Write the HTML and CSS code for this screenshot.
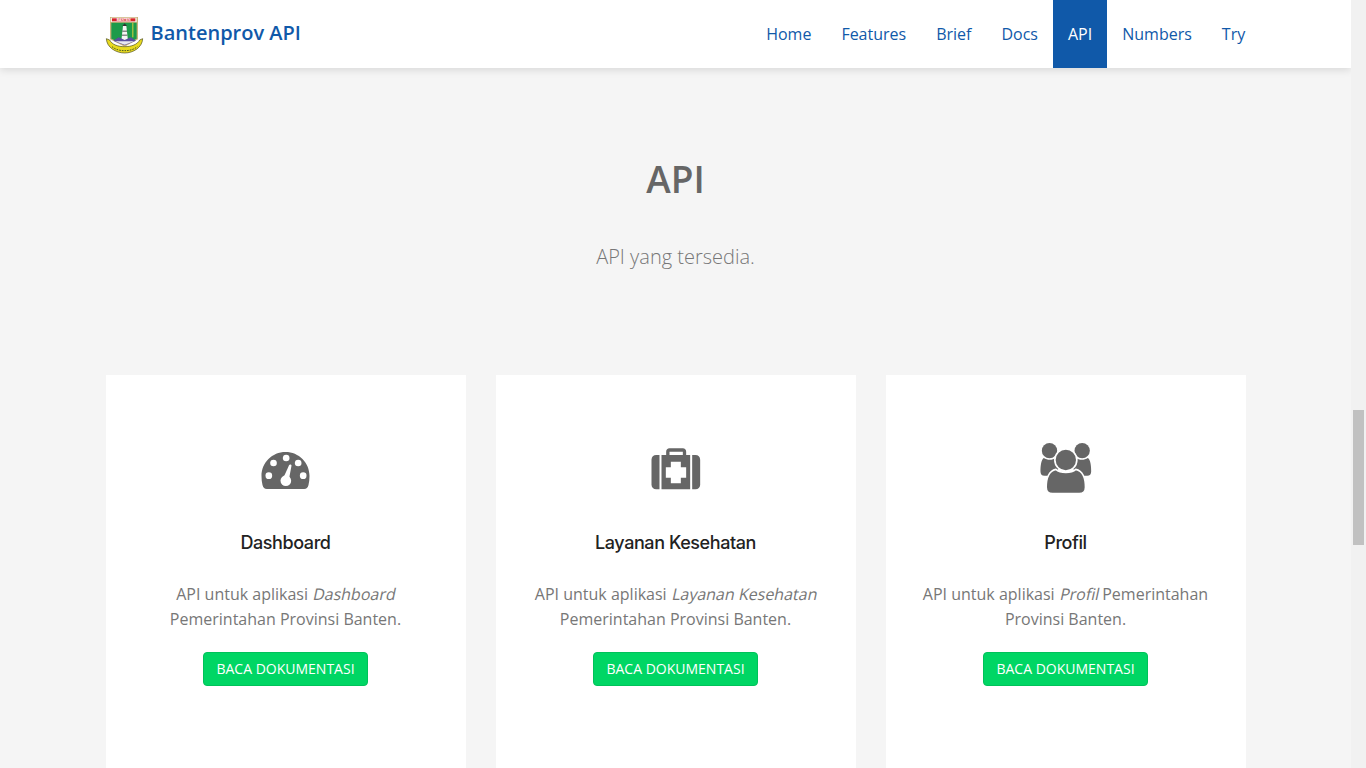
FILE: index.html
```html
<!DOCTYPE html>
<html lang="en">
<head>
  <meta charset="UTF-8">
  <meta name="viewport" content="width=device-width, initial-scale=1.0">
  <title>Bantenprov API</title>
  <link rel="stylesheet" href="styles.css">
</head>
<body>
  <div class="page">
    <div class="content">
      <header class="navbar">
        <div class="container navbar-inner">
          <a class="brand" href="#">
            <svg class="brand-logo" viewBox="45 48 120 120">
              <path d="M60 51H144V118L104 140L60 118Z" fill="#c9b27a"/>
              <rect x="62" y="53" width="78" height="13" fill="#f4f0e6"/>
              <rect x="66" y="55" width="70" height="9" fill="#d8232a"/>
              <text x="101" y="63" class="logo-text">BANTEN</text>
              <path d="M64 68H140V116L104 134L64 116Z" fill="#1c9a4a"/>
              <rect x="127" y="68" width="3" height="44" fill="#d8d040"/>
              <path d="M99 78H109L114 122H94Z" fill="#f5f5f5"/>
              <path d="M97 78L104 70L111 78Z" fill="#333"/>
              <rect x="97" y="92" width="14" height="3" fill="#555"/>
              <rect x="96" y="104" width="16" height="3" fill="#555"/>
              <path d="M70 122L86 112L104 120L122 112L138 122L104 136Z" fill="#5a4f9f"/>
              <path d="M76 124H132L104 134Z" fill="#e8e8f0"/>
              <path d="M49 116L59 120C66 134 84 140 104 140C124 140 142 134 149 120L158 116C157 142 130 159 104 159C78 159 50 142 49 116Z" fill="#e8da20" stroke="#4a4a1a" stroke-width="2"/>
              <path d="M66 140C78 150 92 152 104 152C116 152 130 150 142 140" fill="none" stroke="#4a5a20" stroke-width="3" stroke-dasharray="5 3"/>
            </svg>
            <span class="brand-name">Bantenprov API</span>
          </a>
          <nav class="nav">
            <a href="#">Home</a>
            <a href="#">Features</a>
            <a href="#">Brief</a>
            <a href="#">Docs</a>
            <a class="active" href="#">API</a>
            <a href="#">Numbers</a>
            <a href="#">Try</a>
          </nav>
        </div>
      </header>

      <section class="api">
        <div class="container">
          <h2 class="section-title">API</h2>
          <p class="section-sub">API yang tersedia.</p>
          <div class="cards">
            <div class="card">
              <svg class="card-icon" viewBox="1.5 0 210 210">
                <path d="M49 162C42 162 38 158 36 150C34 142 33 133 33 123C33 83 65 51 105 51C145 51 177 83 177 123C177 133 176 142 174 150C172 158 168 162 161 162Z"/>
                <g class="icon-cut">
                  <circle cx="55" cy="122" r="10"/>
                  <circle cx="69" cy="84" r="10"/>
                  <circle cx="107" cy="69" r="10"/>
                  <circle cx="143" cy="84" r="10"/>
                  <circle cx="158" cy="122" r="10"/>
                  <circle cx="106" cy="137" r="16"/>
                  <path d="M98 130L116 90C118 87 123 88 123 92L115 134Z"/>
                </g>
              </svg>
              <h3>Dashboard</h3>
              <p>API untuk aplikasi <em>Dashboard</em> Pemerintahan Provinsi Banten.</p>
              <a class="btn" href="#">Baca Dokumentasi</a>
            </div>
            <div class="card">
              <svg class="card-icon" viewBox="1.5 0 210 210">
                <path fill-rule="evenodd" d="M77 62V50C77 44 81 40 87 40H127C133 40 137 44 137 50V62H127V50H87V62Z"/>
                <path d="M33 74C33 66 39 60 47 60H57V163H47C39 163 33 157 33 149Z"/>
                <path d="M155 60H165C173 60 179 66 179 74V149C179 157 173 163 165 163H155Z"/>
                <path fill-rule="evenodd" d="M63 60H149V163H63ZM91 80V97H76V128H91V145H121V128H137V97H121V80Z"/>
              </svg>
              <h3>Layanan Kesehatan</h3>
              <p>API untuk aplikasi <em>Layanan Kesehatan</em> Pemerintahan Provinsi Banten.</p>
              <a class="btn" href="#">Baca Dokumentasi</a>
            </div>
            <div class="card">
              <svg class="card-icon" viewBox="1.5 0 210 210">
                <circle cx="57" cy="47" r="23"/>
                <circle cx="155" cy="47" r="23"/>
                <path d="M40 69C50 76 66 76 76 69L90 90L72 122H42C34 122 30 117 30 110C30 92 32 74 40 69Z"/>
                <path d="M172 69C162 76 146 76 136 69L122 90L140 122H170C178 122 182 117 182 110C182 92 180 74 172 69Z"/>
                <g class="icon-outline">
                  <path d="M66 176C55 176 47 169 47 157C47 130 56 107 76 103C90 115 122 115 136 103C156 107 165 130 165 157C165 169 157 176 146 176Z"/>
                  <circle cx="106" cy="75" r="33"/>
                </g>
              </svg>
              <h3>Profil</h3>
              <p>API untuk aplikasi <em>Profil</em> Pemerintahan Provinsi Banten.</p>
              <a class="btn" href="#">Baca Dokumentasi</a>
            </div>
          </div>
        </div>
      </section>
    </div>
    <div class="scrollbar"><div class="scrollbar-thumb"></div></div>
  </div>
</body>
</html>
```

FILE: styles.css
```css
body {
  margin: 0;
  height: 100vh;
  overflow: hidden;
  font-family: "Open Sans", sans-serif;
  font-size: 16px;
  color: #777;
  background-color: #f5f5f5;
}

a {
  text-decoration: none;
}

.page {
  display: flex;
  height: 100vh;
  overflow: hidden;
}

.content {
  flex: 1;
  min-width: 0;
}

.container {
  width: 1140px;
  margin: 0 auto;
}

/* top bar */
.navbar {
  height: 68px;
  background-color: #fff;
  box-shadow: 0 2px 8px rgba(0, 0, 0, 0.12);
}

.navbar-inner {
  display: flex;
  justify-content: space-between;
  height: 100%;
}

.brand {
  display: flex;
  align-items: center;
  gap: 6px;
  color: #1059a9;
  font-size: 20px;
  font-weight: 600;
}

.brand-logo {
  width: 40px;
  height: 40px;
  margin: 4px 0 0 -1px;
}

.brand-name {
  margin-bottom: 3px;
}

.logo-text {
  fill: #fff;
  font-family: "Liberation Sans", sans-serif;
  font-size: 10px;
  font-weight: 700;
  text-anchor: middle;
}

.nav {
  display: flex;
  margin-right: -14.7px;
}

.nav a {
  display: flex;
  align-items: center;
  padding: 0 15px;
  color: #1059a9;
}

.nav a.active {
  background-color: #1059a9;
  color: #fff;
}

/* section */
.api {
  padding-top: 86px;
}

.section-title {
  margin: 0;
  text-align: center;
  color: #666;
  font-size: 37px;
  font-weight: 600;
  line-height: 50px;
}

.section-sub {
  margin: 39px 0 0;
  text-align: center;
  color: #777;
  font-size: 20px;
  font-weight: 300;
  line-height: 28px;
}

.cards {
  display: grid;
  grid-template-columns: repeat(3, 360px);
  gap: 30px;
  margin-top: 104px;
}

.card {
  display: flex;
  flex-direction: column;
  align-items: center;
  height: 500px;
  padding: 60px 30px 0;
  box-sizing: border-box;
  background-color: #fff;
  text-align: center;
}

.card-icon {
  width: 70px;
  height: 70px;
  fill: #666;
}

.icon-cut {
  fill: #fff;
}

.icon-outline {
  stroke: #fff;
  stroke-width: 5;
}

.card h3 {
  margin: 25px 0 0;
  color: #222;
  font-family: Inter, sans-serif;
  font-size: 18px;
  font-weight: 500;
  line-height: 26px;
  letter-spacing: -0.42px;
}

.card p {
  margin: 26px 0 0;
  line-height: 25px;
}

/* the italic in the original is a slanted regular face */
.card em {
  display: inline-block;
  font-style: normal;
  transform: skewX(-12deg);
  transform-origin: 0 75%;
}

.btn {
  display: block;
  margin-top: 20px;
  padding: 0 12.5px;
  border: 1px solid #00c25a;
  border-radius: 4px;
  background-color: #00d664;
  color: #fff;
  font-size: 14px;
  line-height: 32px;
  text-transform: uppercase;
}

/* the scrollbar on the right side of the window */
.scrollbar {
  flex: none;
  display: flex;
  flex-direction: column;
  align-items: center;
  width: 15px;
  padding-top: 410px;
  box-sizing: border-box;
  background-color: #f1f1f1;
}

.scrollbar-thumb {
  width: 11px;
  height: 135px;
  background-color: #c1c1c1;
}
```
